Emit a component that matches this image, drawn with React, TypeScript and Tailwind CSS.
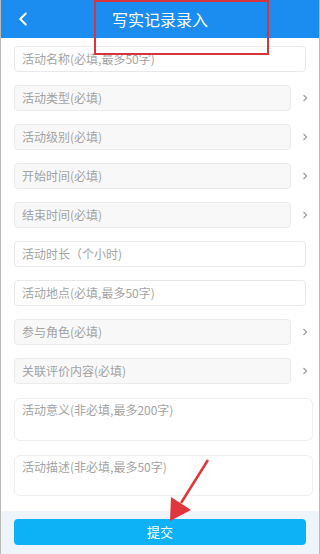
import { ChevronLeft } from 'lucide-react';

const fields: { label: string; select?: boolean }[] = [
    { label: '活动名称(必填,最多50字)' },
    { label: '活动类型(必填)', select: true },
    { label: '活动级别(必填)', select: true },
    { label: '开始时间(必填)', select: true },
    { label: '结束时间(必填)', select: true },
    { label: '活动时长（个小时)' },
    { label: '活动地点(必填,最多50字)' },
    { label: '参与角色(必填)', select: true },
    { label: '关联评价内容(必填)', select: true },
];

function Field({ label, select }: { label: string; select?: boolean }) {
    if (select) {
        return (
            <div className="flex items-center pl-[13px]">
                <div className="w-[277px] h-[26px] rounded-[4px] border border-[#ebebeb] bg-[#f8f8f8] flex items-center px-[7px] text-[12px] text-[#a3a3a3]">
                    {label}
                </div>
                <div className="flex-1 flex justify-center">
                    <svg width="6" height="8" viewBox="0 0 6 8">
                        <polyline points="1.5,1 4.5,4 1.5,7" fill="none" stroke="#a0a0a0" strokeWidth="1.3" />
                    </svg>
                </div>
            </div>
        );
    }
    return (
        <div className="px-[13px]">
            <div className="h-[26px] rounded-[4px] border border-[#e8e8e8] bg-white flex items-center px-[7px] text-[12px] text-[#a3a3a3]">
                {label}
            </div>
        </div>
    );
}

export default function App() {
    return (
        <div
            className="relative w-[320px] h-[554px] bg-white border-x border-[#b9b9b9] flex flex-col overflow-hidden"
            style={{ fontFamily: '"Noto Sans CJK SC", "Noto Sans", sans-serif' }}
        >
            {/* Header */}
            <div className="h-[38px] shrink-0 bg-[#1b8cf0] flex items-center relative">
                <ChevronLeft className="absolute left-[11px] w-[22px] h-[22px] text-white" strokeWidth={2.2} />
                <div className="w-full text-center text-[16px] text-white">写实记录录入</div>
            </div>

            {/* Form */}
            <div className="flex flex-col gap-[13px] pt-[8px] flex-1">
                {fields.map((f, i) => (
                    <Field key={i} label={f.label} select={f.select} />
                ))}
                <div className="pl-[13px] pr-[6px] mt-[1px]">
                    <div className="h-[43px] rounded-[6px] border border-[#eeeeee] bg-white px-[7px] pt-[2px] text-[12px] text-[#a3a3a3]">
                        活动意义(非必填,最多200字)
                    </div>
                </div>
                <div className="pl-[13px] pr-[6px] mt-[1px]">
                    <div className="h-[41px] rounded-[6px] border border-[#eeeeee] bg-white px-[7px] pt-[2px] text-[12px] text-[#a3a3a3]">
                        活动描述(非必填,最多50字)
                    </div>
                </div>
            </div>

            {/* Submit bar */}
            <div className="shrink-0 bg-[#eef4fa] px-[13px] pt-[7px] pb-[9px]">
                <button className="w-full h-[26px] rounded-[4px] bg-[#0cb1f6] text-white text-[13px]">提交</button>
            </div>

            {/* Annotations */}
            <div className="absolute left-[93px] top-0 w-[175px] h-[55px] border-2 border-[#d8343c] pointer-events-none" />
            <svg className="absolute left-0 top-0 pointer-events-none" width="320" height="554">
                <line x1="207" y1="460" x2="180" y2="503" stroke="#e0353b" strokeWidth="2.5" />
                <polygon points="169,521 170,497 190,510" fill="#e0353b" />
            </svg>
        </div>
    );
}
